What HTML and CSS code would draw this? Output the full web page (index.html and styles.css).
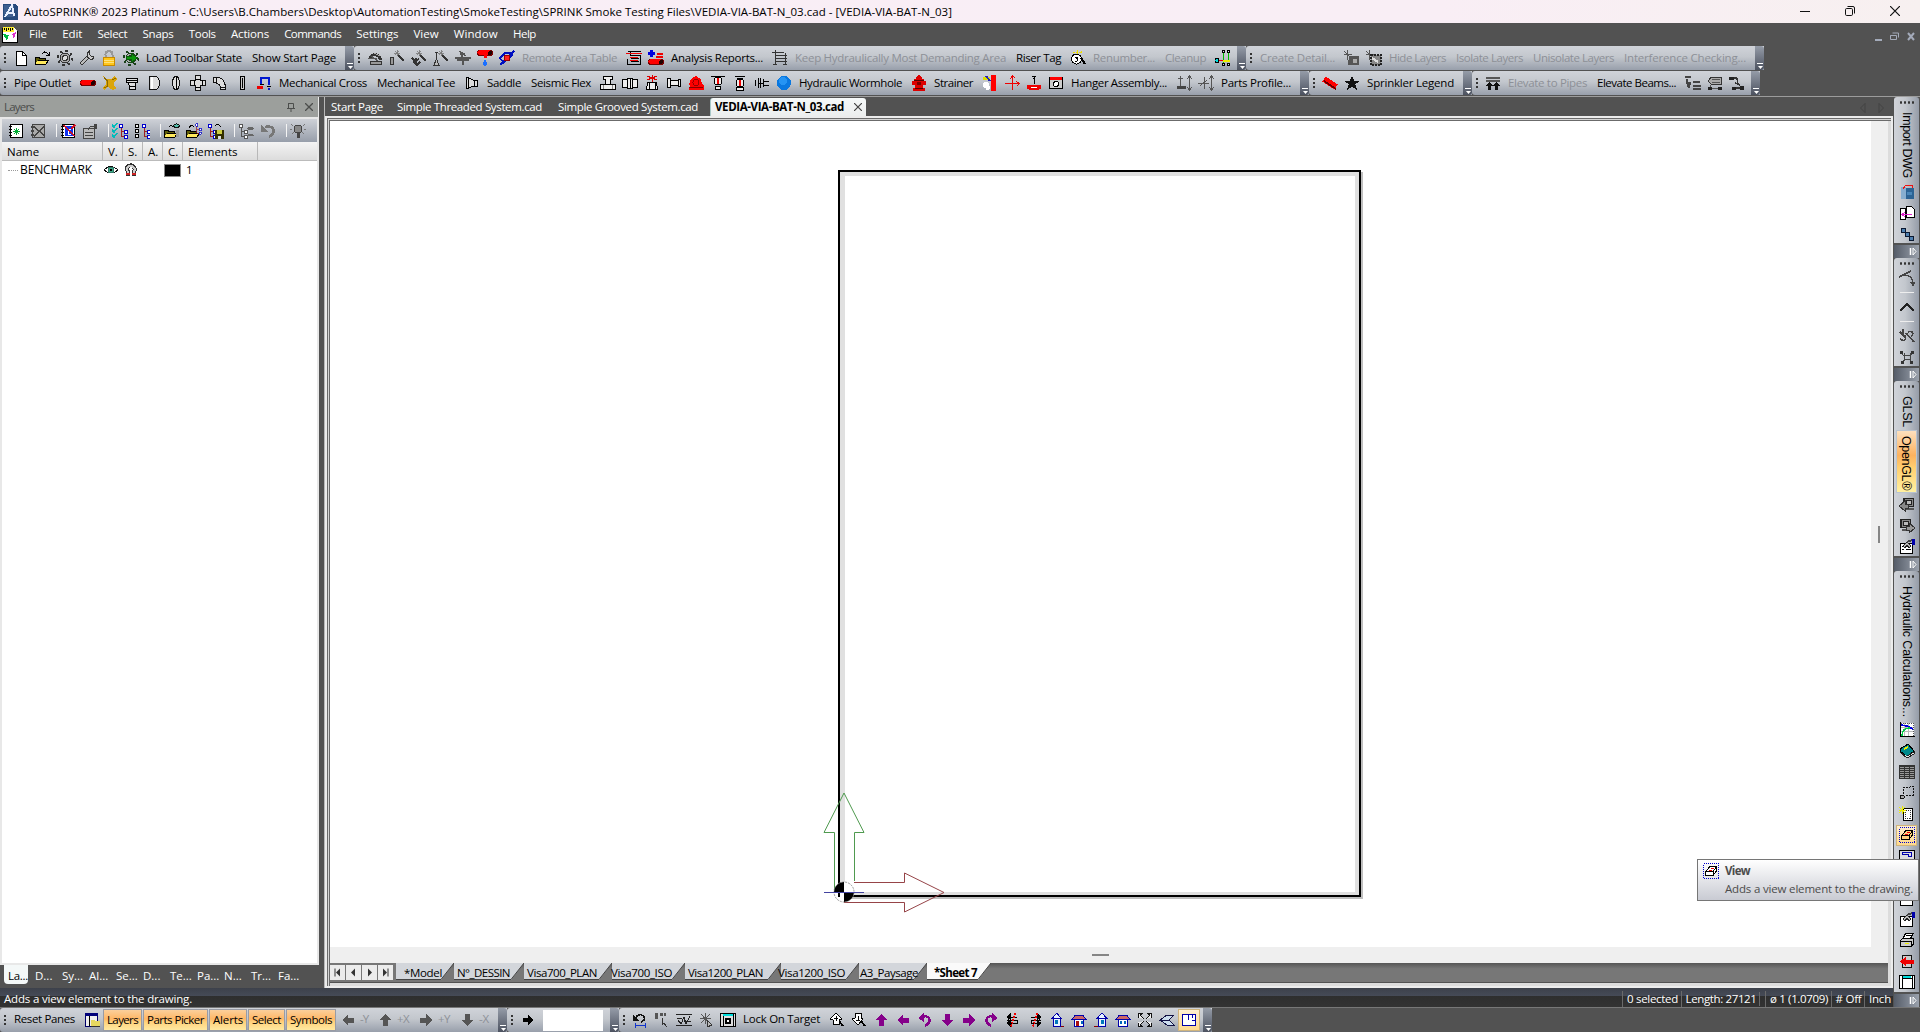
FILE: index.html
```html
<!DOCTYPE html>
<html lang="en">
<head>
<meta charset="utf-8">
<title>AutoSPRINK 2023 Platinum</title>
<link rel="stylesheet" href="styles.css">
</head>
<body>
<header class="titlebar">
  <span data-icon="app"></span>
  <span class="title" data-w="928">AutoSPRINK® 2023 Platinum - C:\Users\B.Chambers\Desktop\AutomationTesting\SmokeTesting\SPRINK Smoke Testing Files\VEDIA-VIA-BAT-N_03.cad - [VEDIA-VIA-BAT-N_03]</span>
  <div class="window-buttons">
    <svg width="10" height="10" viewBox="0 0 10 10"><path d="M0 5.5H10" stroke="#111"/></svg>
    <svg width="10" height="10" viewBox="0 0 10 10" fill="none" stroke="#111"><rect x=".5" y="2.5" width="7" height="7" rx="1.2"/><path d="M2.5 .5H8Q9.500 .5 9.500 2V7.500"/></svg>
    <svg width="10" height="10" viewBox="0 0 10 10"><path d="M0 0L10 10M10 0L0 10" stroke="#111" stroke-width="1.200"/></svg>
  </div>
</header>
<nav class="menubar">
  <span data-icon="doc"></span>
  <div class="menus" id="menus"></div>
  <div class="mdi-buttons">
    <svg width="7" height="9" viewBox="0 0 7 9"><path d="M0 8H7" stroke="#a4abba" stroke-width="2"/></svg>
    <svg width="9" height="9" viewBox="0 0 9 9" fill="none" stroke="#a4abba"><path d="M.5 3.500H6.500V7.500H.5ZM.5 3.500H6M2.500 1V1H8.500V5.500"/></svg>
    <svg width="8" height="9" viewBox="0 0 8 9"><path d="M1 1L7 8M7 1L1 8" stroke="#a4abba" stroke-width="2"/></svg>
  </div>
</nav>
<div class="bar-row" id="row1"></div>
<div class="bar-row" id="row2"></div>
<main class="workspace">
  <aside class="panel">
    <div class="panel-title"><span data-w="30">Layers</span>
      <svg width="8" height="9" viewBox="0 0 8 9" fill="none" stroke="#4c4e4c"><path d="M1.500 .5H6.500V5M1.500 0V5M0 5.500H8M4 5.500V9"/></svg>
      <svg width="8" height="8" viewBox="0 0 8 8"><path d="M0 0L8 8M8 0L0 8" stroke="#4c4e4c" stroke-width="1.300"/></svg>
    </div>
    <div class="panel-body">
      <div class="panel-tools" id="layerTools"></div>
      <div class="cols head"><span>Name</span><span>V.</span><span>S.</span><span>A.</span><span>C.</span><span>Elements</span><span></span></div>
      <div class="cols item"><span><i class="dots"></i><b data-w="72">BENCHMARK</b></span><span data-icon="eye"></span><span data-icon="magnet"></span><span></span><span><i class="swatch"></i></span><span>1</span><span></span></div>
    </div>
    <div class="panel-tabs"><span class="on">La...</span><span>D...</span><span>Sy...</span><span>Al...</span><span>Se...</span><span>D...</span><span>Te...</span><span>Pa...</span><span>N...</span><span>Tr...</span><span>Fa...</span></div>
  </aside>
  <section class="document">
    <div class="doc-tabs">
      <span class="doc-tab" data-w="52">Start Page</span>
      <span class="doc-tab" data-w="145">Simple Threaded System.cad</span>
      <span class="doc-tab" data-w="140">Simple Grooved System.cad</span>
      <div class="doc-tab-on"><span data-w="129">VEDIA-VIA-BAT-N_03.cad</span><svg width="8" height="8" viewBox="0 0 8 8"><path d="M0 0L8 8M8 0L0 8" stroke="#444" stroke-width="1.200"/></svg></div>
      <svg class="tab-arrows" width="24" height="10" viewBox="0 0 24 10" fill="none" stroke="#424242"><path d="M5 .5V9.500L.5 5ZM19 .5V9.500L23.500 5Z"/></svg>
    </div>
    <div class="frame">
      <div class="canvas-area">
        <div class="canvas">
          <div class="paper"></div>
          <svg class="axes" width="124" height="124" viewBox="0 0 124 124" fill="none">
            <path d="M11.500 102V42.500H1L21 3L41 42.500H31.500V91" stroke="#4f9a4f"/>
            <path d="M31 92.500H81.500V83L121 102.500L81.500 122V112.500H21" stroke="#964448"/>
            <circle cx="21" cy="102" r="10" fill="#fff" stroke="#999" stroke-dasharray="2 1"/>
            <path d="M21 102V92A10 10 0 0 0 11 102ZM21 102H31A10 10 0 0 1 21 112Z" fill="#000"/>
            <path d="M16 107V102H21" stroke="#000" stroke-width="2"/>
            <path d="M1 102.500H41" stroke="#4343a0"/>
          </svg>
        </div>
        <div class="gutter-v"><i></i></div>
        <div class="gutter-h"><i></i></div>
      </div>
      <div class="sheets">
        <div class="sheet-nav">
          <svg width="15" height="15" viewBox="0 0 15 15"><path d="M5 3.500V11.500" stroke="#333"/><path d="M10 3.500V11.500L6 7.500Z" fill="#333"/></svg>
          <svg width="15" height="15" viewBox="0 0 15 15"><path d="M9 3.500V11.500L5 7.500Z" fill="#333"/></svg>
          <svg width="15" height="15" viewBox="0 0 15 15"><path d="M6 3.500V11.500L10 7.500Z" fill="#333"/></svg>
          <svg width="15" height="15" viewBox="0 0 15 15"><path d="M10 3.500V11.500" stroke="#333"/><path d="M5 3.500V11.500L9 7.500Z" fill="#333"/></svg>
        </div>
        <div class="sheet-tabs" id="sheets"></div>
      </div>
    </div>
  </section>
  <aside class="side" id="side"></aside>
</main>
<footer class="status">
  <span class="hint" data-w="188">Adds a view element to the drawing.</span>
  <span class="cell"><span data-w="51">0 selected</span></span>
  <span class="cell"><span data-w="71">Length: 27121</span></span>
  <span class="cell empty"></span>
  <span class="cell"><span data-w="58">ø 1 (1.0709)</span></span>
  <span class="cell"><span data-w="26">#&nbsp;Off</span></span>
  <span class="cell"><span data-w="22">Inch</span></span>
</footer>
<div class="bar-row bottom" id="row3"></div>
<div class="tooltip"><span data-icon="view"></span><div><strong data-w="25">View</strong><p><span data-w="188">Adds a view element to the drawing.</span></p></div></div>
<script src="app.js"></script>
</body>
</html>
```
FILE: styles.css
```css
* { box-sizing: border-box; }
body {
  margin: 0; width: 1920px; height: 1032px; overflow: hidden; background: #525252; color: #000;
  font: 11.5px/16px "Open Sans", "Noto Sans", sans-serif; display: flex; flex-direction: column; position: relative;
}
svg { display: block; flex: none; }
.icon { shape-rendering: crispEdges; }
span, b, strong { white-space: nowrap; }
.titlebar { height: 23px; flex: none; background: linear-gradient(90deg, #f9eef6, #f9eef5 75%, #f7f0f0); display: flex; align-items: center; padding-left: 2px; }
.title { margin-left: 6px; }
.window-buttons { margin-left: auto; display: flex; gap: 35px; padding-right: 20px; align-items: center; margin-top: -2px; }
.menubar { height: 23px; flex: none; display: flex; align-items: center; padding-left: 2px; color: #fff; }
.menus { display: flex; gap: 15.200px; margin-left: 11px; margin-top: -2px; }
.mdi-buttons { margin-left: auto; display: flex; gap: 8px; padding: 4px 5px 0 0; }

.bar-row { height: 25px; flex: none; display: flex; }
.bar-row.bottom { border-top: 1px solid #777; background: #525252; }
.group { height: 24px; display: flex; align-items: center; background: linear-gradient(#d0d3d9, #c3c7cd 45%, #989fab); border-radius: 3px 0 0 3px; }
.group .grip { width: 10px; height: 13px; background: radial-gradient(circle, #333 1px, transparent 1.400px) 0 0/10px 4px; flex: none; }
.group .btn { width: 22px; height: 22px; flex: none; display: flex; align-items: center; justify-content: center; }
.group .lab { padding: 0 6px 0 4px; height: 22px; line-height: 22px; flex: none; }
.bottom .group .lab { line-height: 20px; }
.lab.off, .lab.dir { color: #8d9097; }
.group .lab.dir { padding: 0 6px 0 1px; }
.group .lab.hot { background: linear-gradient(#fbcf9b, #ffb766 45%, #ffd27c 60%, #ffe9a0); border: 1px solid #989ba5; padding: 0 3px; line-height: 20px; margin-right: 1px; }
.btn.hot { background: linear-gradient(#fff0d0, #ffd98c); border: 1px solid #d0b47c; }
.cap { width: 9px; height: 24px; margin-left: 3px; flex: none; background: linear-gradient(#959ca8, #4c5260); border-radius: 0 3px 3px 0; }
.bar-row .input { width: 60px; height: 21px; background: #fff; margin: 0 4px; }

.workspace { height: 892px; flex: none; display: flex; border-top: 1px solid #9c9c9c; }
.panel { width: 319px; display: flex; flex-direction: column; flex: none; }
.panel-title { height: 20px; background: #9c9f9c; color: #4a4c4a; display: flex; align-items: center; padding: 0 5px 0 4px; gap: 10px; border: 1px solid #e8e8e8; border-width: 0 1px 0 0; }
.panel-title span { margin-right: auto; }
.panel-body { height: 848px; background: #fff; border: 2px solid #e8e8e8; }
.panel-tools { height: 23px; display: flex; align-items: center; padding-left: 3px; background: linear-gradient(#ced1d7, #979eaa); }
.panel-tools .btn { width: 22px; display: flex; justify-content: center; }
.panel-tools .sep { width: 8px; height: 13px; border-right: 1px solid #f4f4f4; }
.cols { display: grid; grid-template-columns: 101px 20px 20px 20px 20px 75px 1fr; height: 18px; align-items: center; }
.cols.head { height: 19px; background: linear-gradient(#f4f4f4, #dcdcdc); border-bottom: 1px solid #bbb; line-height: 20px; }
.cols.head span { border-right: 1px solid #b8b8b8; height: 18px; padding-left: 5px; }
.cols.head span:last-child { border: 0; }
.cols.item span { display: flex; align-items: center; padding-left: 0; }
.cols.item span:first-child { padding-left: 2px; }
.cols.item span:nth-child(5) { padding-left: 1px; }
.cols.item span:nth-child(6) { padding-left: 3px; }
.cols b { font-weight: normal; font-size: 12px; }
.dots { width: 10px; border-top: 1px dotted #999; margin: 0 2px 0 4px; }
.swatch { width: 17px; height: 13px; background: #000; border: 1px solid #888; }
.panel-tabs { display: flex; color: #fff; padding-left: 4px; height: 20px; }
.panel-tabs span { width: 27px; padding: 3px 0 0 4px; }
.panel-tabs span.on { background: #f4f8f8; color: #000; height: 19px; border-radius: 0 0 4px 4px; width: 24px; margin-right: 3px; padding-left: 4px; letter-spacing: -.3px; }

.document { width: 1569px; margin-left: 5px; flex: none; border-left: 1px solid #b8b8b8; }
.doc-tabs { height: 19px; display: flex; align-items: flex-start; color: #fff; padding-left: 6px; padding-top: 1px; line-height: 18px; }
.doc-tab { margin-right: 14px; }
.doc-tab:nth-child(2) { margin-right: 16px; }
.doc-tab:nth-child(3) { margin-right: 12px; }
.doc-tab-on { width: 156px; height: 18px; background: linear-gradient(#f6f9f9, #eceeee); color: #000; font-weight: bold; border-radius: 3px 3px 0 0; display: flex; align-items: center; gap: 10px; padding-left: 4px; border-left: 1px solid #a8c8c8; }
.tab-arrows { margin: 5px 9px 0 auto; }
.frame { height: 872px; border: 2px solid #ececec; box-shadow: inset 0 1px #6b6b6b, inset 1px 0 #6b6b6b, inset 0 2px #d5d5d5, inset 2px 0 #d5d5d5, inset 0 3px #6b6b6b, inset 3px 0 #6b6b6b, inset 0 0 0 3px #dcdcdc; }
.canvas-area { height: 845px; border: 3px solid transparent; border-bottom: 0; display: grid; grid-template: 826px 1fr / 1fr 17px; }
.canvas { background: #fff; position: relative; }
.paper { position: absolute; left: 508px; top: 49px; width: 523px; height: 727px; border: 2px solid #000; box-shadow: inset 5px 4px #e0e0e0, inset -4px -3px #e0e0e0, 2px 2px #bfbfbf; }
.axes { position: absolute; left: 493px; top: 669px; }
.gutter-v, .gutter-h { background: #efefef; display: flex; align-items: center; justify-content: center; }
.gutter-h { grid-column: 1 / 3; }
.gutter-v i { width: 2px; height: 17px; background: #858585; margin: 0 1px 0 0; }
.gutter-h i { width: 17px; height: 2px; background: #858585; margin-right: 18px; }
.sheets { height: 19px; margin: 0 3px; background: linear-gradient(#565656, #777 30%, #777); display: flex; }
.sheet-nav { display: flex; gap: 1px; padding: 2px 3px 0 0; background: #777; }
.sheet-nav svg { background: #ececec; }
.sheet-tabs { display: flex; height: 17px; }
.sheet { position: relative; line-height: 19px; flex: none; }
.sheet .shape { position: absolute; inset: 0 auto auto 0; }
.sheet .name { position: relative; display: inline-block; }
.sheet.on .name { font-weight: bold; }

.side { width: 26px; height: 911px; margin-left: 1px; display: flex; flex-direction: column; flex: none; }
.vgroup { display: flex; flex-direction: column; align-items: center; background: linear-gradient(90deg, #d0d3d9, #c3c7cd 45%, #959ca8); width: 25px; border-radius: 3px 3px 0 0; padding-top: 3px; flex: none; }
.vgroup .grip { width: 16px; height: 5px; margin-bottom: 1px; background: radial-gradient(circle, #333 1px, transparent 1.400px) 0 0/4px 5px; flex: none; }
.vgroup .btn { height: 21px; width: 21px; display: flex; align-items: center; justify-content: center; flex: none; }
.vgroup .line { width: 14px; height: 8px; background: linear-gradient(#eee, #eee) 0 4px/14px 1px no-repeat; flex: none; }
.vgroup .vlab { writing-mode: vertical-rl; text-orientation: sideways; width: 20px; line-height: 20px; font-family: "Liberation Sans", sans-serif; font-size: 12.500px; flex: none; margin-top: 6px; padding-bottom: 3px; }
.vgroup .vlab.hot { background: linear-gradient(#fde0be, #fcb25f 40%, #ffcf70 60%, #fff0a0); border: 1px solid #b9c4d0; width: 21px; padding: 5px 0; height: 63px; margin-top: 0; }
.vcap { height: 13px; width: 25px; background: linear-gradient(90deg, #555c68, #9aa1ac); flex: none; display: flex; align-items: center; justify-content: flex-end; padding-right: 2px; margin-top: 2px; }

.status { height: 19px; width: 1893px; flex: none; background: linear-gradient(#3d414b, #454a56 40%, #2e2e2e 41%, #333); color: #fff; display: flex; align-items: center; padding: 3px 0 0 4px; }
.status .hint { margin-right: auto; }
.cell { border-left: 1px solid #6a6a6a; padding-left: 4px; margin-right: 2.500px; }
.cell.empty { height: 14px; padding: 0; margin: 0 5px 0 0; }
.cell:last-child { margin-right: 2px; }
.tooltip { position: absolute; left: 1697px; top: 859px; width: 222px; height: 42px; border: 1px solid #767676; background: linear-gradient(#fff, #c9cbd3); color: #4c4c4c; display: flex; padding: 3px 0 0 5px; gap: 6px; line-height: 16px; }
.tooltip strong { display: inline-block; }
.tooltip p { margin: 2px 0 0; }
```
FILE: app.js
```js
// 16x16 icon artwork
const k = 'stroke="#000" fill="none"', g = 'stroke="#555" fill="none"';
const P = (d, a) => `<path d="${d}" ${a}/>`;
const F = (d, c) => `<path d="${d}" fill="${c}"/>`;
const wand = P('M9 5L15 11', 'stroke="#333" stroke-width="1.500"') + P('M8 0V6M5 3H11M6 1L10 5M10 1L6 5', 'stroke="#777" stroke-width=".8"');
const arrow = (r, c) => `<g transform="rotate(${r} 8 8)">${F('M8 2L14 8H10.500V14H5.500V8H2Z', c)}</g>`;
const curve = (c, flip) => `<g ${flip ? 'transform="matrix(-1 0 0 1 16 0)"' : ''}>${P('M5 5C12 2 16 9 8 14', `stroke="${c}" stroke-width="2.500" fill="none"`)}${F('M1 6L7 1V10Z', c)}</g>`;
const book = P('M2.500 1.500H14.500V14.500H2.500Z', 'stroke="#000" fill="#fff"') + P('M1 3.500H4M1 6.500H4M1 9.500H4M1 12.500H4', k);
const folder = F('M0 7H4L5 8H11V15H0Z', '#5c5a08') + F('M3 10H14L11 15H0Z', '#ffe95c') + P('M.5 14.500V7.500H4L5 8.500H10.500V10M3 10.500H13.500L10.500 14.500H.5', k);
const tree = (x, c) => P(`M${x} 2V13.500H${x + 4}M${x} 8.500H${x + 4}`, `stroke="${c === '#00c' ? '#a02020' : c}" fill="none"`) + P(`M${x - 1.500} 1H${x + 1.500}V4H${x - 1.500}ZM${x + 3} 7H${x + 6}V10H${x + 3}ZM${x + 3} 12H${x + 6}V15H${x + 3}Z`, `stroke="${c}" fill="#fff"`);
const gear = c => `<circle cx="8" cy="8" r="5" fill="#aaa" stroke="${c}"/><circle cx="8" cy="8" r="7" fill="none" stroke="${c}" stroke-width="2" stroke-dasharray="2.500 3"/><circle cx="8" cy="8" r="2.500" fill="#ddd" stroke="${c}"/>`;
const pipe = (y, c = '#f00') => P(`M2.500 ${y}H13`, `stroke="#700" stroke-width="6" stroke-linecap="round"`) + P(`M2.500 ${y - .5}H12`, `stroke="${c}" stroke-width="4.500" stroke-linecap="round"`) + `<circle cx="13" cy="${y}" r="2" fill="#200"/>`;
const house = (w, r) => F('M3 7H13V14H3Z', '#fff') + P('M3.500 7V14.500H12.500V7', 'stroke="#00a" fill="none"') + P('M1 7.500L4 3.500H12L15 7.500Z', `stroke="#00a" fill="${r}"`) + w;
const monitor = P('M5 2.500H14.500V10.500H5Z', 'stroke="#222" stroke-width="1.500" fill="#888"') + P('M7 4.500H12.500V8.500H7Z', 'stroke="#222" fill="#bbb"') + F('M6 12H15V14H6Z', '#555');
const sheet = P('M1.500 5.500H13.500V15.500H1.500Z', 'stroke="#000" fill="#fff"');
const hand = P('M4 8L8 4L12 8L10 10L8 7L6 10Z', 'stroke="#222" fill="#bbb"') + P('M8 4L13 2', 'stroke="#444" stroke-width="2"') + F('M13 1H16V7H13Z', '#00a');
const viewIcon = face => P('M.5 .5H15.500V15.500H.5Z', 'stroke="#00c" fill="none" stroke-dasharray="1 1"') + P('M2.500 8.500L7 3.500H13.500V8L10 12.500H2.500ZM2.500 8.500H10V12.500M10 8.500L13.500 4', `stroke="#000" fill="${face}"`) + P('M8 5.500H11M6 7.500H9', 'stroke="#e00"');
const beams = P('M1 2.500H15M1 5.500H15', 'stroke="#555" stroke-width="2"');

const ICONS = {
  app: F('M1 0H13L16 3V16H1Z', '#274a7c') + F('M2 1H12V13H2Z', '#3f5f90') + P('M3 13C6 8 8 5 10 1L12 12M4 9H12', 'stroke="#e8f0ff" stroke-width="2" fill="none"'),
  doc: F('M1 1H12L15 4V15H1Z', '#fff') + F('M1 0H12V5H1Z', '#ffee30') + P('M2 1V3M4 1V4M6 1V3M8 1V4M10 1V3', k) + F('M1 7L7 8L5 14Z', '#0b4') + F('M10 7L14 5L12 12Z', '#d3c') + P('M.5 .5V15.500H15.500V4', k),
  new: P('M3.500 1.500H9.500L13.500 5.500V15.500H3.500Z', 'stroke="#000" fill="#fff"') + P('M9.500 1.500V5.500H13.500', k),
  open: folder + P('M7 4C9 1 11 1 14 5M14 2V5H11', k),
  gear: gear('#333'),
  wrench: P('M3 13L10 6', 'stroke="#333" stroke-width="4" stroke-linecap="round"') + P('M3 13L10 6', 'stroke="#bbb" stroke-width="2" stroke-linecap="round"') + P('M10 1C7 4 8 8 11 9S15 8 15 6L12 6L10 4Z', 'stroke="#333" fill="#ccc"'),
  lock: P('M4.500 8V4.500C4.500 0 11.500 0 11.500 4.500V8', 'stroke="#999" stroke-width="2" fill="none"') + P('M2.500 7.500H13.500V15H2.500Z', 'stroke="#c88a00" fill="#ffc61a"') + P('M3 10.500H13M3 12.500H13', 'stroke="#ffe27a"'),
  gearGo: gear('#1a401a') + P('M3 6.500H8V3L14.500 8L8 13V9.500H3Z', 'stroke="#0a5a0a" fill="#0b960b"'),
  sprink: P('M3 9C5 3 11 3 14 10', 'stroke="#333" stroke-width="3" fill="none"') + P('M1 8.500H10M3 5L12 12', g) + P('M3.500 11.500H14.500V14.500H3.500Z', 'stroke="#333" fill="#999"') + P('M7 3L13 6', 'stroke="#aaa"'),
  wand1: wand + P('M1.500 7.500H4.500V14.500H1.500Z', 'stroke="#333" fill="#999"'),
  wand2: wand + P('M1 8L4 11L8 9M2 12L6 15L9 12M5 8V14', 'stroke="#333" stroke-width="1.500" fill="none"'),
  wand3: wand + P('M2 2H5M3.500 2V9M3.500 9L1 15H6Z', 'stroke="#333" fill="#bbb"'),
  wand4: P('M0 7.500H16M2 9.500H14', 'stroke="#555" stroke-width="2"') + P('M7 2V8M5 4H10M8 7V15', 'stroke="#555" stroke-width="2"') + P('M4 1L11 6', g),
  drip: pipe(3) + P('M8 5V8', 'stroke="#f00" stroke-width="3"') + F('M8 9C5 13 6 16 8 16S11 13 8 9', '#1c70ff'),
  node: P('M1 15L6 10M10 6L15 1', 'stroke="#0010c0" stroke-width="2.500"') + P('M5 13L1 8L6 3H13M4 13L14 5', 'stroke="#0010c0" stroke-width="1.500" fill="none"') + '<circle cx="8" cy="8" r="3" fill="#f22" stroke="#900"/>',
  report: P('M1.500 1.500H14.500M1.500 14.500H14.500M4.500 1V5.500H14.500V14M4.500 8.500H13M4.500 11.500H13M1.500 8.500V15', k) + P('M0 3.500H16M4 7.500H12M4 10.500H12', 'stroke="#e00" fill="none"'),
  plusRed: P('M0 3.500H7M3.500 0V7', 'stroke="#00d" stroke-width="2.500"') + P('M9 3.500H15M8 6.500H15', 'stroke="#e00" stroke-width="2"') + pipe(12),
  grid: P('M0 2.500H12M3 5.500H15M3 8.500H15M3 11.500H15M3.500 0V15M13.500 3V15M1 14.500H5M11 14.500H15', 'stroke="#333" fill="none"'),
  tag: '<circle cx="6.500" cy="9" r="5" fill="#fff" stroke="#000"/>' + P('M11 8L15 14', 'stroke="#000" stroke-width="2"') + P('M5 7H8L6.500 8.500C9 9 8 12 5 11', k) + P('M3 2L12 3M7 0V4M11 1V4', 'stroke="#f0e000" stroke-dasharray="2 1"'),
  net: P('M8.500 3V13.500M13.500 2V10', 'stroke="#0b0"') + P('M8 10.500H15', 'stroke="#ee0" stroke-width="2"') + P('M3 10.500H8', 'stroke="#e00"') + '<circle cx="2" cy="10.500" r="2" fill="#0dd" stroke="#000"/>' + P('M7.500 .5H9.500V2.500H7.500ZM12.500 .5H14.500V2.500H12.500ZM7.500 13.500H9.500V15.500H7.500ZM12.500 13.500H14.500V15.500H12.500Z', 'stroke="#000" fill="#dde"'),
  det1: P('M3 0V10M0 4H8M0 1L7 8', g) + F('M5 6H15V15H4Z', '#555') + '<circle cx="11" cy="11" r="2.500" fill="#aaa"/>',
  det2: P('M3 0V10M0 4H8M0 1L7 8', g) + P('M4.500 4.500H14.500V14.500H4.500Z', 'stroke="#222" stroke-dasharray="2 1" stroke-width="2" fill="#888"') + P('M6 8L12 12', 'stroke="#ddd" stroke-width="2"'),
  pipe: pipe(8),
  tee: F('M1 1L5 4L9 4L13 1L15 4L12 7V11L15 13L11 15L6 12L2 15L1 12L4 10V6Z', '#dba50a') + P('M2 2L5 6M5 5V12M10 5L14 3M2 13L6 11', 'stroke="#8d6a00"'),
  cup: P('M2.500 3.500H13.500V7.500H2.500ZM4.500 7.500H11.500V14.500H6ZM5 11H11M2 5.500H13', 'stroke="#000" fill="#ddd"'),
  cap: P('M3.500 1.500H10Q13.500 3 13.500 8T10 14.500H3.500Z', 'stroke="#111" fill="#ddd"') + P('M6 2V14', 'stroke="#fff" stroke-width="2"'),
  ring: '<ellipse cx="8" cy="8" rx="3.500" ry="7" fill="#ddd" stroke="#111"/>' + P('M8 1V15', k),
  cross: P('M5.500 .5H10.500V5.500H15.500V10.500H10.500V15.500H5.500V10.500H.5V5.500H5.500Z', 'stroke="#111" fill="#ddd"') + P('M4 5V11M12 5V11M5 4H11M5 12H11', k),
  elbow: P('M1.500 2.500H6Q13.500 3 13.500 14.500H8.500Q9 8 1.500 7.500ZM8 12H14M4 2V8', 'stroke="#111" fill="#ddd"'),
  plate: P('M6.500 1.500H10.500V14.500H6.500Z', 'stroke="#000" fill="#ccc"') + P('M8.500 3V13', k),
  hook: P('M1 12H7', 'stroke="#e00" stroke-width="3"') + P('M5 9V3H13V10M13 13V15', 'stroke="#0018d0" stroke-width="2" fill="none"') + P('M4 9H8M11 11H15', k),
  cone: P('M2.500 2.500H4.500V13.500H2.500ZM4.500 3L9 5H13.500V11H9L4.500 13M10 5V11', 'stroke="#000" fill="#ddd"'),
  f1: P('M.5 9.500H15.500V14.500H.5ZM5.500 9V4.500H3.500V1.500H12.500V4.500H10.500V9', 'stroke="#000" fill="#eee"') + P('M3.500 10V14M12.500 10V14', 'stroke="#888"'),
  f2: P('M.5 4.500H5.500V12.500H.5ZM5.500 3.500H10.500V13.500H5.500ZM10.500 4.500H15.500V12.500H10.500ZM8 4V13', 'stroke="#000" fill="#eee"'),
  f3: P('M3.500 7.500H12.500L13.500 14.500H2.500ZM5 7V15M11 7V15', 'stroke="#000" fill="#eee"') + P('M3 5L13 1M3 1L13 5M8 0V7', 'stroke="#d00"'),
  f4: P('M1.500 3.500H4.500V12.500H1.500ZM4.500 5.500H12V10.500H4.500ZM12.500 4.500H14.500V11.500H12.500Z', 'stroke="#000" fill="#eee"'),
  pump: F('M1 15L2 11L1 9L3 4L8 1L13 4L14 9L16 11V15Z', '#f00') + '<circle cx="8" cy="7.500" r="3" fill="none" stroke="#900"/>' + P('M1 12.500H15', 'stroke="#800"'),
  h1: P('M1 1.500H15', k) + '<circle cx="8" cy="6" r="4" fill="#eee" stroke="#000"/>' + P('M8 3V9', 'stroke="#e00" stroke-width="2"') + P('M5.500 11.500H10.500V14.500H5.500Z', 'stroke="#000" fill="#eee"'),
  h2: P('M3 1.500H13M5 3.500H11', k) + '<circle cx="8" cy="8" r="4" fill="#eee" stroke="#000"/>' + P('M8 5V11', 'stroke="#e00" stroke-width="2"') + P('M4.500 12.500H11.500V15.500H4.500Z', 'stroke="#000" fill="#eee"'),
  h3: P('M1.500 5V11M4.500 3V13M4.500 8.500H9M9.500 4V12M9 6.500H15M9 10H15M6.500 3V13', k),
  ball: '<circle cx="8" cy="8" r="7" fill="#0a78e0"/><circle cx="7" cy="6" r="4" fill="#2594f4"/>',
  hydrant: F('M5 2L8 0L11 2V4H13V6H15V10H12V13H14V16H2V13H4V10H1V6H3V4H5Z', '#d00') + P('M3 5H13M4 13H12', 'stroke="#500"') + '<circle cx="8" cy="8.500" r="2" fill="#700"/>',
  wall: F('M9 0H14V16H9Z', '#f00') + P('M1 3H8', 'stroke="#dd0" stroke-width="3"') + P('M4 1L8 6', 'stroke="#22b" stroke-width="2"') + '<circle cx="4" cy="10" r="3" fill="#fff"/><circle cx="6" cy="13" r="2" fill="#fff"/>',
  redX: P('M1 8.500H15M8.500 1V15M6 4L8.500 1L11 3M12 6L15 8.500L13 11', 'stroke="#e00" fill="none"'),
  strain: P('M6 1H10M7 3H9M8 1V9', k) + P('M3 12H13', 'stroke="#e00" stroke-width="5" stroke-linecap="round"') + P('M5 12.500H11', 'stroke="#fff"'),
  box: P('M1.500 2.500H14.500V13.500H1.500Z', 'stroke="#000" fill="#ccc"') + F('M2 2H14V5H2Z', '#f00') + '<circle cx="8" cy="9" r="2.500" fill="#fff" stroke="#000"/>',
  hang1: P('M4.500 1V11M2 3H7M13.500 2V14M11 4L13.500 1L16 4M11 12L13.500 15L16 12', g) + P('M1 12H10', 'stroke="#444" stroke-width="3"'),
  hang2: P('M0 8.500H11M6.500 2V14M2 11L9 5M13.500 2V14M11 4L13.500 1L16 4M11 12L13.500 15L16 12', g),
  beam: P('M2 4L14 12', 'stroke="#f00" stroke-width="6"') + P('M2 6L14 14', 'stroke="#600" stroke-width="1.500"'),
  star: F('M8 1L10.200 6H15.500L11.200 9.300L13 15L8 11.500L3 15L4.800 9.300L.5 6H5.800Z', '#111'),
  el0: beams + P('M4.500 15V9M11.500 15V9', 'stroke="#111" stroke-width="2.500"') + F('M1 11L4.500 7L8 11ZM8 11L11.500 7L15 11Z', '#111'),
  el1: P('M0 2H6M2 4V7M8 7H15M8 11H16M8 14H16', 'stroke="#444" stroke-width="2"') + F('M1 7L6 7L5 13H3Z', '#444'),
  el2: P('M4 2.500H14.500V9H4L1 6Z', 'stroke="#333" fill="#aaa"') + P('M5 4.500H13M5 7H13M4 13H13M4 10L3 15', g) + F('M1 12H5V15H1ZM11 12H15V15H11Z', '#222'),
  el3: P('M2 3H8M8 3L9 9M6 8L11 10M5 13H12', 'stroke="#333" stroke-width="1.500" fill="none"') + F('M0 2H5V5H0ZM3 12H7V15H3ZM11 11H15V15H11Z', '#222'),
  ly1: book + P('M8.500 5V12M5 8.500H12M6 6L11 11M11 6L6 11', 'stroke="#0a3"'),
  ly2: P('M2.500 1.500H14.500V14.500H2.500Z', 'stroke="#444" fill="#aaa"') + P('M4 4L15 13M15 3L4 13M1 4H4M1 8H4M1 12H4', 'stroke="#444" stroke-width="1.500"'),
  ly3: book + F('M5 3H13V13H5Z', '#1030f0') + P('M8 6H11M8 8H11M8 11H11M8 6V11', 'stroke="#fff"') + P('M4 2L14 13M15 2L11 6', 'stroke="#d01020" stroke-width="1.500"'),
  props: P('M1.500 5.500H12.500V15H1.500ZM3 9H11M3 12H11M6 7L9 3L13 4', 'stroke="#444" fill="#bbb"') + F('M12 1H15V6H12Z', '#444'),
  ly5: P('M0 2L2 4L5 0M0 7L2 9L5 5M0 12L2 14L5 10', 'stroke="#0bb" stroke-width="1.500" fill="none"') + tree(9, '#00c'),
  ly6: P('M1.500 1.500H4.500V4.500H1.500ZM1.500 6.500H4.500V9.500H1.500ZM1.500 11.500H4.500V14.500H1.500Z', 'stroke="#000" fill="#eee"') + tree(10, '#00c'),
  ly7: folder + P('M5 4C6 2 8 2 9 4', k) + P('M9 3C11 0 14 0 16 3C14 5 11 5 9 3', 'stroke="#111" fill="#5ba"') + F('M12 7H15V14H12Z', '#999'),
  ly8: folder + P('M3 5C4 2 6 2 8 4', k) + `<g transform="translate(4 0) scale(.75)">${tree(9, '#00c')}</g>`,
  ly9: tree(2, '#00c') + P('M7 3C9 1 11 1 13 4', k) + F('M7 7H16V16H7Z', '#332f00') + F('M9 7H14V11H9Z', '#cc4') + F('M10 13H13V16H10Z', '#ddd'),
  ly10: tree(3, '#555') + F('M9 5C11 3 14 3 16 5C14 8 11 8 9 5ZM9 13C10 10 15 10 16 13Z', '#666'),
  undo: P('M5 4C15 2 16 10 9 14', 'stroke="#777" stroke-width="2.500" fill="none"') + F('M1 2V9H8Z', '#777'),
  bulb: '<circle cx="8" cy="6" r="4" fill="#888" stroke="#444"/>' + P('M8 10V15', 'stroke="#444" stroke-width="3"') + P('M1 1L3 3M15 1L13 3M0 6H2M14 6H16M2 11L4 9M14 11L12 9', 'stroke="#777"'),
  eye: P('M1 8Q8 1 15 8Q8 14 1 8Z', 'stroke="#111" fill="#fff"') + '<circle cx="8" cy="8" r="3" fill="#3ca888" stroke="#376"/><circle cx="8" cy="8" r="1.200"/>',
  magnet: P('M5 14V10C0 1 15 1 11 10V14', 'stroke="#333" stroke-width="4" fill="none"') + P('M5 13V10C0 2 15 2 11 10V13', 'stroke="#ccc" stroke-width="2" fill="none"') + P('M3 12H7M9 12H13', 'stroke="#c22" stroke-width="2"'),
  dwg: F('M2 4H15V15H2Z', '#2c6394') + F('M2 3L7 3V15H2Z', '#87aed0') + P('M4 5L7 1H13V4', 'stroke="#e11" fill="none"') + F('M8 8H13V11H8Z', '#4a86b8'),
  pages: P('M1.500 3.500H6.500V14.500H1.500ZM7.500 1.500H12.500L15.500 4.500V12.500H7.500Z', 'stroke="#000" fill="#fff"') + P('M3 9.500H13M6 7L3 9.500L6 12', 'stroke="#d2c" fill="none"'),
  chain: P('M2.500 2.500H6.500V6.500H2.500ZM6.500 6.500H10.500V10.500H6.500ZM10.500 10.500H14.500V14.500H10.500Z', 'stroke="#0a1830" fill="#4d7fb0" stroke-width="1.500"'),
  s1: P('M0 7L8 3L12 1M5 5C11 5 14 8 14 14M12 12L14 15L16 12', 'stroke="#444" stroke-width="1.500" fill="none"'),
  s2: P('M1 12L8 5L15 12', 'stroke="#222" stroke-width="2" fill="none"'),
  s3: P('M1 4L7 10M4 1V8M1 11C5 14 8 12 6 7M7 5L15 14M9 4C14 2 15 6 12 9', 'stroke="#444" stroke-width="1.700" fill="none"'),
  s4: P('M2 4C5 8 11 8 14 4M3 14C4 9 12 9 13 14M5 4V12M11 4V12', 'stroke="#444" fill="none"') + F('M1 2H4V5H1ZM12 2H15V5H12ZM2 12H5V15H2ZM11 12H14V15H11Z', '#333'),
  mon1: monitor + P('M0 10L6 5V8H9V12H6V15Z', 'stroke="#333" fill="#888"'),
  mon2: `<g transform="translate(-3 0)">${monitor}</g>` + P('M16 11L10 6V9H7V13H10V16Z', 'stroke="#333" fill="#999"'),
  prop2: sheet + P('M3 8.500H5M7 8.500H12M3 11.500H5M7 11.500H12', k) + hand,
  chart: F('M1 1H15V15H1Z', '#fff') + P('M1 5.500H15M1 9.500H15M5.500 1V15M9.500 1V15', 'stroke="#bbb"') + P('M1.500 0V14.500H16', 'stroke="#000" fill="none"') + P('M1.500 1.500H15M14.500 1V15', 'stroke="#555" stroke-dasharray="1 1"') + P('M2 3L8 4L14 7', 'stroke="#00d" stroke-width="1.500" fill="none"') + P('M3 14C3 8 7 6 11 6', 'stroke="#0c4" stroke-width="1.500" fill="none"'),
  help: P('M1 6L9 1L15 8L8 14L1 8Z', 'stroke="#000" fill="#00898c"') + P('M8 13L15 9V11L8 15L1 9', 'stroke="#222" fill="#eee"') + P('M5 6L9 4', 'stroke="#ee0" stroke-width="2"'),
  table: F('M0 1H16V15H0Z', '#333') + P('M1 3.500H15M1 5.500H15M1 7.500H15M1 9.500H15M1 11.500H15M1 13.500H15', 'stroke="#999"') + P('M5.500 1V15M10.500 1V15', 'stroke="#333"'),
  lasso: P('M4 9V4Q5 1.500 8 2.500L14.500 1.500V10H6', 'stroke="#111" fill="none" stroke-dasharray="2 1"') + P('M1 12C2 9 8 11 5 13C3 14 1 14 1 12', 'stroke="#111" fill="#aaa"'),
  newsheet: P('M4.500 2.500H13.500V14.500H4.500Z', 'stroke="#000" fill="#fff"') + P('M6.500 4.500H11.500V12.500H6.500Z', 'stroke="#333" stroke-dasharray="1 1" fill="none"') + P('M3 0V8M0 4H7M0 1L6 7M6 1L0 7', 'stroke="#ee0"'),
  view: viewIcon('#fff'), viewOn: viewIcon('#ffd080'),
  win: P('M.5 2.500H15.500V14.500H.5Z', 'stroke="#000" fill="#ddd"') + P('M3 4.500H12.500V8.500H9V6H3Z', 'stroke="#00a" fill="none"'),
  prop3: sheet + hand,
  print: P('M1.500 8.500L4 6H14.500V12L12 14.500H1.500Z', 'stroke="#000" fill="#ccc"') + P('M4 6.500L6.500 1.500H14L11.500 6.500Z', 'stroke="#000" fill="#fff"') + P('M7 3.500H12M2 9.500H12V14', k) + P('M6 11.500H10', 'stroke="#ee0"'),
  exit: P('M3.500 2.500H12.500V14.500H3.500Z', 'stroke="#111" fill="#ccc"') + F('M1 8.500L7 3.500V6.500H15V10.500H7V13.500Z', '#e00'),
  winc: P('M.5 1.500H15.500V14.500H.5Z', 'stroke="#000" fill="#fff"') + F('M4 2H12V4H4Z', '#0dd') + P('M3 1V15M13 1V15M3 4.500H13', k),
  panes: P('M1.500 1.500H13.500V14.500H1.500Z', 'stroke="#00006a" fill="#eee"') + F('M1 1H14V4H1Z', '#00007a') + P('M5.500 4V14', k) + F('M7 8H10L11 9H16V14H7Z', '#e6d860') + P('M7 14.500H16', 'stroke="#333"'),
  aL: arrow(270, '#555'), aU: arrow(0, '#555'), aR: arrow(90, '#555'), aD: arrow(180, '#555'),
  go: F('M3 6H8V3L13 8L8 13V10H3Z', '#000'),
  b1: P('M4 6C6 0 14 3 12 8L9 10', 'stroke="#111" fill="none" stroke-width="1.500"') + F('M1 3V9H7Z', '#111') + P('M3 13.500H14M3.500 11V16M13.500 11V16', 'stroke="#13c"'),
  b2: P('M1 2H12M1 5H4', 'stroke="#555" stroke-width="3" stroke-dasharray="3 1.500"') + P('M8 6V13L10 11L13 15', 'stroke="#333" fill="none"'),
  b3: P('M0 2.500H16M0 13.500H16M2 8L5 12L8 5L10 12L14 4M1 6H6M8 9H15', 'stroke="#222" fill="none"'),
  b4: P('M7 1V12M2 6H13M3 2L11 11M12 2L3 11', 'stroke="#555"') + P('M9 8V15L14 13Z', 'stroke="#333" fill="#bbb"'),
  b5: P('M.5 1.500H15.500V14.500H.5ZM3 1V15M13 1V15', 'stroke="#000" fill="#ddd"') + F('M3 2H13V4H3Z', '#0dd') + '<circle cx="8" cy="9" r="3" fill="#fff" stroke="#000"/>' + P('M8 6L10 9L8 12L6 9Z', k),
  m1: P('M10 9L14 14', 'stroke="#000" stroke-width="2"') + P('M7 1L13 7L10 8V12H4V8L1 7Z', 'stroke="#000" fill="#fff"') + P('M7 4V9M5 6H9', k),
  m2: P('M10 9L14 14', 'stroke="#000" stroke-width="2"') + P('M4 1H10V6L12 7L7 13L1 7L4 6Z', 'stroke="#000" fill="#fff"') + P('M7 4V9M5 8H9', k),
  pU: arrow(0, '#85008a'), pL: arrow(270, '#85008a'), pD: arrow(180, '#85008a'), pR: arrow(90, '#85008a'),
  pC: curve('#85008a'), pW: curve('#85008a', 1),
  r1: P('M12 5H5L3 8H12V11H5', 'stroke="#000" fill="none"') + F('M6 1V8L1 5ZM6 8V15L1 11Z', '#000') + P('M10 1L6 15', 'stroke="#e00" stroke-width="2" stroke-dasharray="2 1"'),
  r2: P('M4 5H11L13 8H4V11H11', 'stroke="#000" fill="none"') + F('M10 1V8L15 5ZM10 8V15L15 11Z', '#000') + P('M10 1L6 15', 'stroke="#e00" stroke-width="2" stroke-dasharray="2 1"'),
  ho1: P('M4.500 6V14.500H11.500V6M3 6.500L8 1L12 6.500Z', 'stroke="#00a" fill="#e8f4ff"') + F('M6 8H9V12H6Z', '#07b') + P('M12 14.500H15', 'stroke="#800"'),
  ho2: house(F('M5 9H8V14H5Z', '#a11') + F('M10 9H12V12H10Z', '#06b'), '#c66'),
  ho3: P('M5.500 6V14.500H12.500V6M4 6.500L9 1L14 6.500Z', 'stroke="#00a" fill="#e8f4ff"') + F('M8 8H11V12H8Z', '#07b') + P('M1 14.500H5', 'stroke="#800"'),
  ho4: house(F('M5 9H7V12H5ZM9 9H11V12H9Z', '#06b'), '#c66'),
  ext: P('M1.500 5.500V1.500H5.500L3 3L7 7M14.500 5.500V1.500H10.500L13 3L9 7M1.500 10.500V14.500H5.500L3 13L7 9M14.500 10.500V14.500H10.500L13 13L9 9', 'stroke="#111" fill="#eee"'),
  iso: P('M1 8L8 3H15L10 8ZM1 8L8 13H15L10 8', 'stroke="#114" fill="#cde"'),
  plan: P('M1.500 2.500H14.500V13.500H1.500ZM7 2V8M11 2V6M11 8H14', 'stroke="#00a" fill="#fff"'),
};
const svg = n => `<svg class="icon" width="16" height="16" viewBox="0 0 16 16">${ICONS[n]}</svg>`;
const capSvg = '<svg width="9" height="24" viewBox="0 0 9 24"><path d="M2 17.500H8" stroke="#fff"/><path d="M3 20H8L5.500 23Z" fill="#fff"/></svg>';
const vcapSvg = '<svg width="8" height="9" viewBox="0 0 8 9"><path d="M1.500 1V8" stroke="#fff" stroke-width="1.500"/><path d="M4 1L7 4.500L4 8Z" fill="none" stroke="#fff"/></svg>';

// A string of icon names, or [label, width, style]
const item = i => Array.isArray(i)
  ? (i[0] === '' ? '<span class="input"></span>' : `<span class="lab ${i[2] || ''}"><span data-w="${i[1]}">${i[0]}</span></span>`)
  : i.split(' ').map(n => `<span class="btn ${n[0] === '!' ? 'hot' : ''}">${svg(n.replace('!', ''))}</span>`).join('');
const bar = (id, groups) => {
  document.getElementById(id).innerHTML = groups.map(gr =>
    `<div class="group"><i class="grip"></i>${gr.map(item).join('')}<i class="cap">${capSvg}</i></div>`).join('');
};
bar('row1', [
  ['new open gear wrench lock gearGo', ['Load Toolbar State', 96], ['Show Start Page', 84]],
  ['sprink wand1 wand2 wand3 wand4 drip node', ['Remote Area Table', 95, 'off'], 'report plusRed', ['Analysis Reports...', 92], 'grid', ['Keep Hydraulically Most Demanding Area', 211, 'off'], ['Riser Tag', 45], 'tag', ['Renumber...', 62, 'off'], ['Cleanup', 41, 'off'], 'net'],
  [['Create Detail...', 75, 'off'], 'det1 det2', ['Hide Layers', 57, 'off'], ['Isolate Layers', 67, 'off'], ['Unisolate Layers', 81, 'off'], ['Interference Checking...', 122, 'off']],
]);
bar('row2', [
  [['Pipe Outlet', 57], 'pipe tee cup cap ring cross elbow plate hook', ['Mechanical Cross', 88], ['Mechanical Tee', 78], 'cone', ['Saddle', 34], ['Seismic Flex', 60], 'f1 f2 f3 f4 pump h1 h2 h3 ball', ['Hydraulic Wormhole', 103], 'hydrant', ['Strainer', 39], 'wall redX strain box', ['Hanger Assembly...', 96], 'hang1 hang2', ['Parts Profile...', 70]],
  ['beam star', ['Sprinkler Legend', 87]],
  ['el0', ['Elevate to Pipes', 79, 'off'], ['Elevate Beams...', 79], 'el1 el2 el3'],
]);
bar('row3', [
  [['Reset Panes', 61], 'panes', ['Layers', 31, 'hot'], ['Parts Picker', 57, 'hot'], ['Alerts', 30, 'hot'], ['Select', 29, 'hot'], ['Symbols', 42, 'hot'], 'aL', ['-Y', 8, 'dir'], 'aU', ['+X', 12, 'dir'], 'aR', ['+Y', 12, 'dir'], 'aD', ['-X', 10, 'dir']],
  ['go', ['']],
  ['b1 b2 b3 b4 b5', ['Lock On Target', 77], 'm1 m2 pU pL pC pD pR pW r1 r2 ho1 ho2 ho3 ho4 ext iso !plan'],
]);
document.getElementById('menus').innerHTML = [['File', 18], ['Edit', 20], ['Select', 30], ['Snaps', 31], ['Tools', 27], ['Actions', 38], ['Commands', 57], ['Settings', 42], ['View', 25], ['Window', 44], ['Help', 23]]
  .map(m => `<span data-w="${m[1]}">${m[0]}</span>`).join('');
document.getElementById('layerTools').innerHTML = ['ly1 ly2', 'ly3 props', 'ly5 ly6', 'ly7 ly8 ly9', 'ly10 undo', 'bulb']
  .map(item).join('<i class="sep"></i>');

// Sheet tabs: [name, tab width, text width, text inset]
document.getElementById('sheets').innerHTML = [['*Model', 58, 38, 8], ['N°_DESSIN', 70, 53, 3], ['Visa700_PLAN', 88, 70, 3], ['Visa700_ISO', 73, 61, -1], ['Visa1200_PLAN', 96, 75, 3], ['Visa1200_ISO', 78, 67, -3], ['A3_Paysage', 68, 58, 1], ['*Sheet 7', 64, 43, 7, 'on']]
  .map(([n, w, tw, p, on]) => `<span class="sheet ${on || ''}" style="width:${w}px"><svg class="shape" width="${w}" height="17" viewBox="0 0 ${w} 17"><path d="M0 0H${w}L${w - 13} 17H0Z" fill="${on ? '#fafafa' : '#d3d6db'}"/><path d="M${w} 0L${w - 13} 16.500H0" stroke="#444" fill="none"/></svg><span class="name" style="margin-left:${p}px" data-w="${tw}">${n}</span></span>`).join('');

const vbtn = s => s.split(' ').map(n => n === '|' ? '<i class="line"></i>' : `<span class="btn ${n[0] === '!' ? 'hot' : ''}">${svg(n.replace('!', ''))}</span>`).join('');
const vlab = (t, w, c = '') => `<span class="vlab ${c}"><span data-h="${w}">${t}</span></span>`;
document.getElementById('side').innerHTML = [
  [146, vlab('Import DWG', 66) + vbtn('dwg pages chain')],
  [108, vbtn('s1 | s2 | s3 s4')],
  [175, vlab('GLSL', 31) + vlab('OpenGL®', 54, 'hot') + vbtn('mon1 mon2 prop2')],
  [421, vlab('Hydraulic Calculations...', 131) + vbtn('chart help table lasso newsheet !viewOn win props prop3 prop3 print exit winc')],
].map(([h, s]) => `<div class="vgroup" style="height:${h}px"><i class="grip"></i>${s}</div><i class="vcap">${vcapSvg}</i>`).join('');

document.querySelectorAll('[data-icon]').forEach(e => { e.innerHTML = svg(e.dataset.icon); });

// Spread each label over its nominal width
document.querySelectorAll('[data-w],[data-h]').forEach(e => {
  const v = e.dataset.h, w = +(v || e.dataset.w);
  const r = document.createRange();
  r.selectNodeContents(e);
  const b = r.getBoundingClientRect();
  const n = (v ? b.height : b.width);
  e.style.letterSpacing = ((w - n) / e.textContent.length).toFixed(3) + 'px';
});
```
